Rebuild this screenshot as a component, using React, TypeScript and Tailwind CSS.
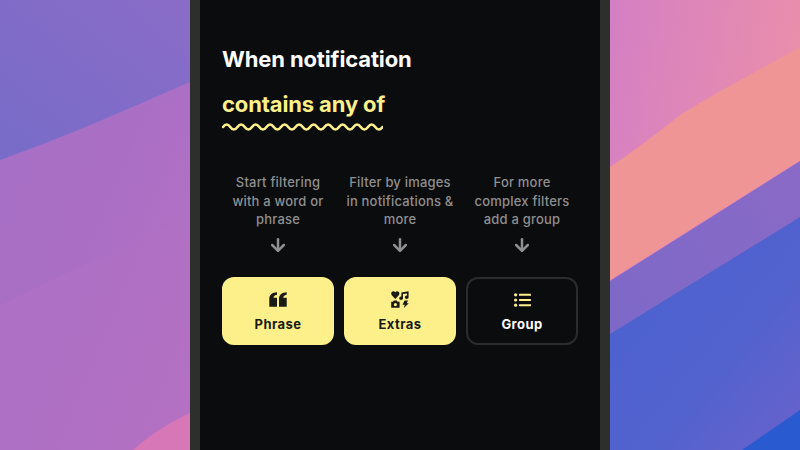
import React from 'react';
import { ArrowDown } from 'lucide-react';

const QuoteIcon = () => (
  <svg width="18" height="15" viewBox="0 0 18 15" fill="#1a1a16">
    <path d="M8 0.2 V2.8 C6 3 4.8 4 4.5 5.8 H8 V14.8 H0.3 V6.6 C0.3 2.8 3.4 0.4 8 0.2 Z" />
    <path d="M17.7 0.2 V2.8 C15.7 3 14.5 4 14.2 5.8 H17.7 V14.8 H10 V6.6 C10 2.8 13.1 0.4 17.7 0.2 Z" />
  </svg>
);

const ExtrasIcon = () => (
  <svg width="18" height="17" viewBox="0 0 18 17" fill="#1a1a16">
    <path d="M4.3 8 L0.8 4.2 C-0.5 2.4 0.5 0.3 2.4 0.3 C3.2 0.3 3.9 0.7 4.3 1.4 C4.7 0.7 5.4 0.3 6.2 0.3 C8.1 0.3 9.1 2.4 7.8 4.2 Z" />
    <path d="M10.4 1.5 L17.6 0.2 V6.2 A1.9 1.7 0 1 1 16 4.6 V2.4 L12 3.1 V7.2 A1.9 1.7 0 1 1 10.4 5.6 Z" />
    <path d="M2.8 9.4 H5.7 L6.6 10.8 H8.6 V16.8 H0.2 V10.8 H1.9 Z M4.4 12 A1.6 1.6 0 1 0 4.4 15.2 A1.6 1.6 0 1 0 4.4 12 Z" fillRule="evenodd" />
    <path d="M13.6 9.4 H17 L15.7 12.2 H17.8 L12.8 17 L13.8 13.7 H11.5 Z" />
  </svg>
);

const GroupIcon = () => (
  <svg width="17" height="14" viewBox="0 0 17 14" fill="#fdf08a">
    <circle cx="1.6" cy="1.8" r="1.6" />
    <circle cx="1.6" cy="7" r="1.6" />
    <circle cx="1.6" cy="12.2" r="1.6" />
    <rect x="5" y="0.8" width="12" height="2" rx="0.4" />
    <rect x="5" y="6" width="12" height="2" rx="0.4" />
    <rect x="5" y="11.2" width="12" height="2" rx="0.4" />
  </svg>
);

const squiggle = Array.from({ length: 11 }, () => 'q3.6 -5 7.25 0 t7.25 0').join(' ');

const Wallpaper = ({ side }: { side: 'left' | 'right' }) =>
  side === 'left' ? (
    <svg className="w-[190px] h-full shrink-0" viewBox="0 0 190 450" preserveAspectRatio="none">
      <defs>
        <linearGradient id="l1" x1="0" y1="1" x2="1" y2="0">
          <stop offset="0" stopColor="#776cc8" />
          <stop offset="1" stopColor="#8a6cc8" />
        </linearGradient>
        <linearGradient id="l2" x1="0" y1="0" x2="1" y2="1">
          <stop offset="0" stopColor="#a66fc6" />
          <stop offset="0.5" stopColor="#aa6fc5" />
          <stop offset="1" stopColor="#b871c3" />
        </linearGradient>
      </defs>
      <rect width="190" height="450" fill="url(#l2)" />
      <path d="M0 305 C60 275 130 245 190 212 V450 H0 Z" fill="#b172c4" fillOpacity="0.45" />
      <path d="M0 160 C70 135 130 108 190 82 V0 H0 Z" fill="url(#l1)" />
      <path d="M133 450 C150 435 170 422 190 413 V450 Z" fill="#d877b8" />
    </svg>
  ) : (
    <svg className="w-[190px] h-full shrink-0" viewBox="0 0 190 450" preserveAspectRatio="none">
      <defs>
        <linearGradient id="r1" x1="0" y1="0" x2="1" y2="0.4">
          <stop offset="0" stopColor="#d47fc4" />
          <stop offset="1" stopColor="#ec90a8" />
        </linearGradient>
        <linearGradient id="r3" x1="0" y1="1" x2="1" y2="0">
          <stop offset="0" stopColor="#7a68c8" />
          <stop offset="1" stopColor="#8a6ac6" />
        </linearGradient>
        <linearGradient id="r4" x1="0" y1="0" x2="1" y2="1">
          <stop offset="0" stopColor="#4a62d0" />
          <stop offset="0.6" stopColor="#5262ce" />
          <stop offset="1" stopColor="#6a62cc" />
        </linearGradient>
      </defs>
      <rect width="190" height="450" fill="url(#r1)" />
      <path d="M0 167 C25 150 45 135 70 115 C110 90 150 70 190 47 V160 L0 280 Z" fill="#f09596" />
      <path d="M0 281 L190 161 V450 H0 Z" fill="url(#r3)" />
      <path d="M0 334 L190 217 V450 H0 Z" fill="url(#r4)" />
      <path d="M132 450 L190 410 V450 Z" fill="#2a5ad0" />
    </svg>
  );

const items = [
  { text: <>Start filtering<br />with a word or<br />phrase</>, label: 'Phrase', icon: <QuoteIcon />, filled: true },
  { text: <>Filter by images<br />in notifications &amp;<br />more</>, label: 'Extras', icon: <ExtrasIcon />, filled: true },
  { text: <>For more<br />complex filters<br />add a group</>, label: 'Group', icon: <GroupIcon />, filled: false },
];

export default function App() {
  return (
    <div className="flex w-[800px] h-[450px] overflow-hidden bg-[#0b0c0e] font-['Inter',sans-serif]">
      <Wallpaper side="left" />
      <div className="w-[420px] h-full shrink-0 border-x-[10px] border-[#2d2f2c] bg-[#0b0c0e] px-[22px] pt-[44px]">
        <h1 className="text-[22px] leading-[30px] font-bold text-white tracking-[-0.13px] whitespace-nowrap">When notification</h1>
        <div className="mt-[15px] w-[161px]">
          <p className="text-[22px] leading-[30px] font-bold text-[#fdf08a] tracking-[-0.13px] whitespace-nowrap">contains any of</p>
          <svg className="block mt-[4px]" width="161" height="8" viewBox="0 0 161 8" fill="none">
            <path d={`M1 4 ${squiggle}`} stroke="#fdf08a" strokeWidth="2.6" strokeLinecap="round" />
          </svg>
        </div>
        <div className="mt-[42px] grid grid-cols-3 gap-[10px]">
          {items.map((item) => (
            <div key={item.label} className="flex flex-col items-center">
              <p className="text-[13px] leading-[18.5px] font-medium text-[#8f8f8f] text-center tracking-[0.2px] whitespace-nowrap">{item.text}</p>
              <ArrowDown className="mt-[6.5px] text-[#8f8f8f]" size={20} strokeWidth={3} />
              <div
                className={
                  item.filled
                    ? 'mt-[22px] w-full h-[68px] rounded-[12px] bg-[#fdf08a] text-[#1a1a16] flex flex-col items-center justify-center gap-[7px]'
                    : 'mt-[22px] w-full h-[68px] rounded-[12px] border-2 border-[#2a2c2e] text-white flex flex-col items-center justify-center gap-[7px]'
                }
              >
                <div className="h-[18px] flex items-center">{item.icon}</div>
                <span className="text-[13px] leading-[16px] font-bold tracking-[0.45px]">{item.label}</span>
              </div>
            </div>
          ))}
        </div>
      </div>
      <Wallpaper side="right" />
    </div>
  );
}
